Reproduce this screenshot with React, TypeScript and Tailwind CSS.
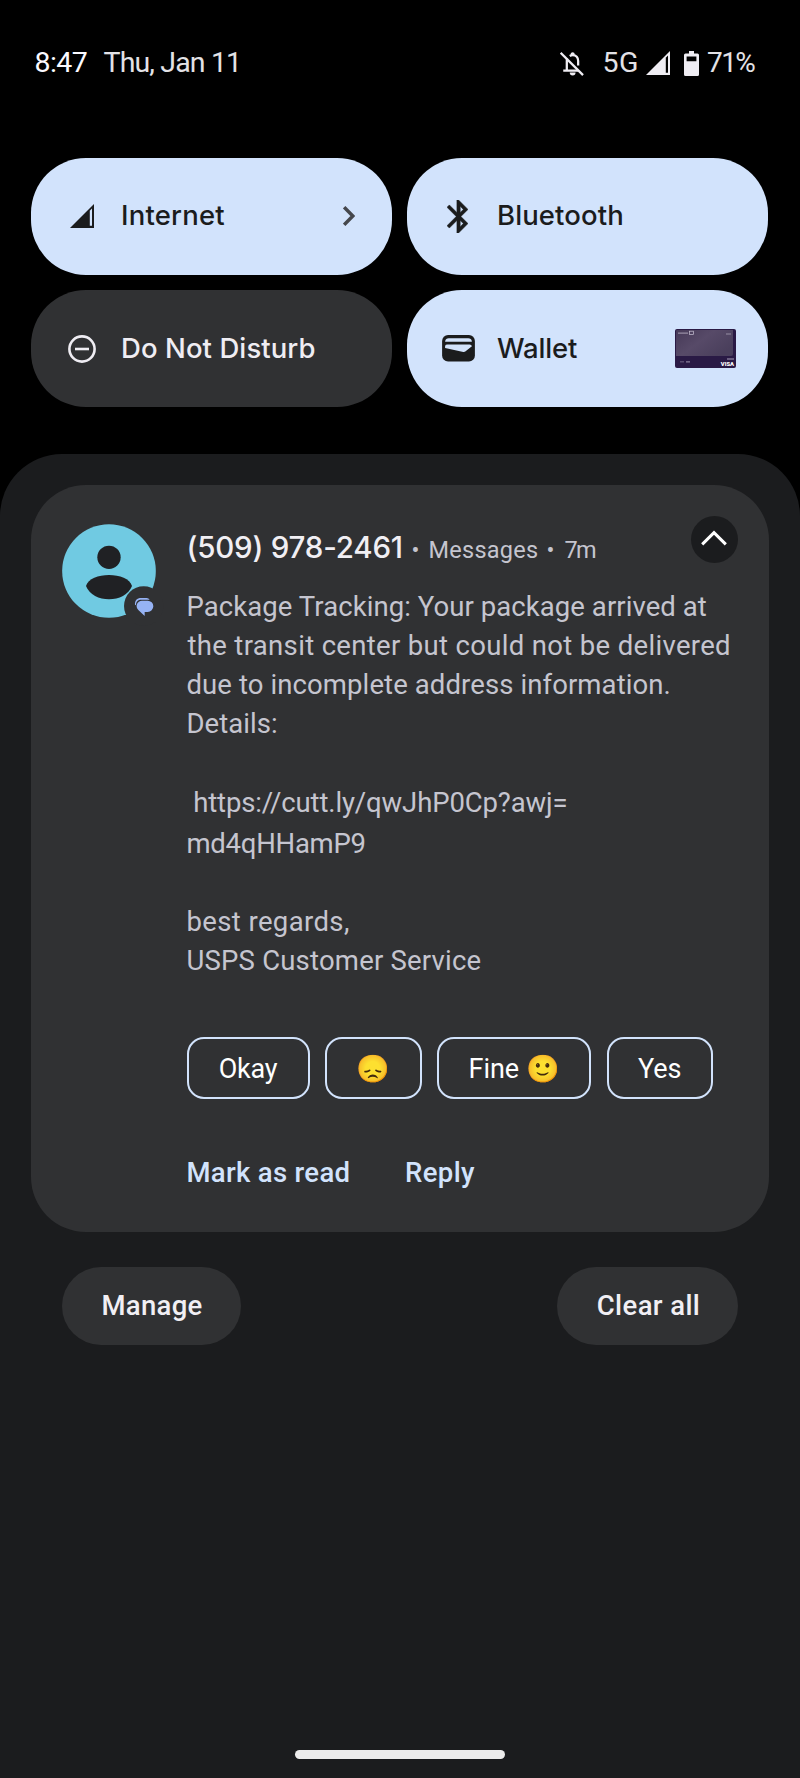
import type { ReactNode } from "react";

function SilentBell() {
  return (
    <svg viewBox="60 62 74 76" className="h-[25px] w-[24px] shrink-0" fill="none" stroke="#efedf3" strokeWidth="7">
      <path d="M90 77C93 75 96 74 99 74C110 74 116 82 116 92V106M82 84C81 87 81 90 81 93V122M70 122H116" />
      <path d="M62 67L131 136" />
      <path d="M93 75V70a6 5 0 0 1 12 0V75Z" fill="#efedf3" stroke="none" />
      <path d="M90 128H108a9 9 0 0 1-18 0Z" fill="#efedf3" stroke="none" />
    </svg>
  );
}

function Signal({ color, hole }: { color: string; hole: string }) {
  return (
    <svg viewBox="0 0 24 24" className="h-[24px] w-[24px] shrink-0">
      <path d="M24 0V24H0Z" fill={color} />
      <path d="M19.8 6.7L22 4.6V21.8H19.8Z" fill={hole} />
    </svg>
  );
}

function Battery() {
  return (
    <svg viewBox="0 0 15 25" className="h-[25px] w-[15px] shrink-0">
      <path
        fillRule="evenodd"
        fill="#efedf3"
        d="M5 0H10V2.5H13.5Q15 2.5 15 4V23.5Q15 25 13.5 25H1.5Q0 25 0 23.5V4Q0 2.5 1.5 2.5H5ZM2.6 5.4V10.2H12.4V5.4Z"
      />
    </svg>
  );
}

function Bluetooth() {
  return (
    <svg viewBox="5 2 12.71 20" className="mr-[2px] h-[33px] w-[21px]" fill="#1b1c1d" stroke="#1b1c1d" strokeWidth="0.3">
      <path d="M17.71 7.71L12 2h-1v7.59L6.41 5 5 6.41 10.59 12 5 17.59 6.41 19 11 14.41V22h1l5.71-5.71-4.3-4.29 4.3-4.29zM13 5.83l1.88 1.88L13 9.59V5.83zm1.88 10.46L13 18.17v-3.76l1.88 1.88z" />
    </svg>
  );
}

function WalletIcon() {
  return (
    <svg viewBox="124 585 99 80" className="h-[26.5px] w-[33px]">
      <rect x="124" y="585" width="99" height="80" rx="18" fill="#1b1c1d" />
      <path d="M133 605C134 598 138 595 144 595H203C209 595 213 598 214 605Z" fill="#d2e3fc" />
      <path d="M133 624V618Q134 614 140 614H207Q213 614 214 619L194 635Q191 637 188 636Z" fill="#d2e3fc" />
    </svg>
  );
}

function DoNotDisturb() {
  return (
    <svg viewBox="0 0 28 28" className="h-[28px] w-[28px]" fill="none" stroke="#efedf3" strokeWidth="2.6">
      <circle cx="14" cy="14" r="12.6" />
      <path d="M7 14H21" />
    </svg>
  );
}

function PaymentCard() {
  return (
    <svg viewBox="0 0 61 39" className="h-[39px] w-[61px]">
      <defs>
        <linearGradient id="sheen" x1="0" y1="0" x2="1" y2="0.6">
          <stop offset="0" stopColor="#473a58" />
          <stop offset="0.5" stopColor="#574a68" />
          <stop offset="1" stopColor="#4a3f5c" />
        </linearGradient>
      </defs>
      <rect width="61" height="39" rx="2" fill="#2a1a45" />
      <path d="M1 2Q1 1 2 1H58V25Q58 27 56 27H1Z" fill="url(#sheen)" />
      <g fill="#c9c2d4">
        <path d="M3 3.6H13V4.8H3ZM51 4.6H56V5.6H51ZM5 32.4H9V33.2H5ZM11 32.2H15V33.6H11Z" opacity="0.6" />
        <path d="M52 29.5H59V30.5H52Z" opacity="0.8" />
      </g>
      <rect x="14.5" y="2.2" width="4" height="3.4" fill="none" stroke="#c9c2d4" strokeWidth="0.7" />
      <text x="45.8" y="36.9" fill="#fff" fontFamily="Roboto, sans-serif" fontSize="6" fontWeight="900" textLength="13.2" lengthAdjust="spacingAndGlyphs">
        VISA
      </text>
    </svg>
  );
}

function Avatar() {
  return (
    <svg viewBox="186 252 282 282" className="h-[94px] w-[94px] overflow-visible">
      <circle cx="327" cy="393" r="140.5" fill="#70cae2" />
      <circle cx="327" cy="352" r="35" fill="#202124" />
      <path d="M258 438C270 394 384 394 396 438C376 491 278 491 258 438Z" fill="#202124" />
      <circle cx="431" cy="498" r="59" fill="#303133" />
      <path d="M405 494C404 482 411 474 423 474H440Q446 474 449 479H425C413 479 408 485 408 496Z" fill="#96b3f5" />
      <path d="M426 482H443a17 17 0 0 1 0 34H434V528L415 510C404 498 412 482 426 482Z" fill="#96b3f5" />
    </svg>
  );
}

function Tile({ icon, label, active, tracking, trailing }: { icon: ReactNode; label: string; active?: boolean; tracking: string; trailing?: ReactNode }) {
  return (
    <button
      className={`flex h-[117px] items-center rounded-[55px] pl-[34.5px] ${active ? "bg-[#d2e3fc] text-[#1b1c1d]" : "bg-[#303133] text-[#efedf3]"}`}
    >
      <span className="flex w-[33px] justify-center">{icon}</span>
      <span className={`ml-[22.5px] pb-[2px] font-['Inter',sans-serif] text-[27.5px] leading-[40px] font-medium whitespace-nowrap ${tracking}`}>{label}</span>
      {trailing}
    </button>
  );
}

const body: { text: string; style: string }[] = [
  { text: "Package Tracking: Your package arrived at", style: "tracking-[0.07px]" },
  { text: "the transit center but could not be delivered", style: "ml-[1px] tracking-[0.33px]" },
  { text: "due to incomplete address information.", style: "tracking-[0.1px]" },
  { text: "Details:", style: "tracking-[0.05px]" },
  { text: "", style: "" },
  { text: "\u00a0https://cutt.ly/qwJhP0Cp?awj=", style: "tracking-[-0.13px]" },
  { text: "md4qHHamP9", style: "mt-[2px] tracking-[-0.26px]" },
  { text: "", style: "" },
  { text: "best regards,", style: "tracking-[0.38px]" },
  { text: "USPS Customer Service", style: "tracking-[0.2px]" },
];

function Chip({ width, children }: { width: string; children: ReactNode }) {
  return (
    <button
      className={`flex h-[62px] items-center justify-center rounded-[17px] border-2 border-[#d2e3fc] pt-[2px] text-[27px] leading-[40px] whitespace-nowrap text-white ${width}`}
    >
      {children}
    </button>
  );
}

export default function App() {
  return (
    <div className="flex h-[1778px] w-[800px] flex-col overflow-hidden bg-black font-['Roboto','Noto_Color_Emoji',sans-serif]">
      <header className="flex h-[126px] shrink-0 items-center pr-[33px] pl-[34.5px] text-[28.5px] leading-[40px] whitespace-nowrap text-[#e3e2e6]">
        <span className="w-[69px] tracking-[-0.6px] text-[#fbfaff]">8:47</span>
        <span className="tracking-[-0.86px]">Thu, Jan 11</span>
        <div className="ml-auto flex items-center text-[28px]">
          <SilentBell />
          <span className="ml-[18.5px] w-[43.5px] text-[28.5px] tracking-[0.6px]">5G</span>
          <Signal color="#efedf3" hole="#000" />
          <span className="ml-[14px] flex">
            <Battery />
          </span>
          <span className="ml-[8px] w-[60px] tracking-[-1.6px]">71%</span>
        </div>
      </header>

      <section className="mt-[31.5px] mr-[32px] ml-[31px] grid grid-cols-2 gap-x-[15px] gap-y-[15.5px]">
        <Tile
          active
          icon={<Signal color="#1b1c1d" hole="#d2e3fc" />}
          label="Internet"
          tracking="tracking-[0.2px]"
          trailing={
            <svg viewBox="0 0 12 20" className="mr-[37px] ml-auto h-[20px] w-[12px]" fill="none" stroke="#45474c" strokeWidth="3.4">
              <path d="M1.2 1.2L9.8 10L1.2 18.8" />
            </svg>
          }
        />
        <Tile active icon={<Bluetooth />} label="Bluetooth" tracking="tracking-[0.1px]" />
        <Tile icon={<DoNotDisturb />} label="Do Not Disturb" tracking="tracking-[0.08px]" />
        <Tile
          active
          icon={<WalletIcon />}
          label="Wallet"
          tracking="tracking-[-0.15px]"
          trailing={
            <span className="mr-[32px] ml-auto">
              <PaymentCard />
            </span>
          }
        />
      </section>

      <main className="mt-[47px] flex flex-1 flex-col rounded-t-[62px] bg-[#1b1c1e] pt-[31px]">
        <article className="mx-[31px] flex h-[747px] shrink-0 rounded-[55px] bg-[#303133]">
          <div className="mt-[39px] ml-[31px] w-[124.5px] shrink-0">
            <Avatar />
          </div>
          <div className="min-w-0 flex-1">
            <div className="flex justify-between pr-[31px]">
              <div className="mt-[42px] flex h-[40px] items-baseline text-[23.5px] leading-[40px] whitespace-nowrap text-[#c5c5cf]">
                <h1 className="w-[225px] font-['Inter',sans-serif] text-[29.5px] font-medium tracking-[-0.2px] text-[#f1eff4]">(509) 978-2461</h1>
                <span className="w-[17px]">•</span>
                <span className="w-[118px] tracking-[0.26px]">Messages</span>
                <span className="w-[18px]">•</span>
                <span className="tracking-[-1.8px]">7m</span>
              </div>
              <button className="mt-[31px] flex h-[47px] w-[47px] items-center justify-center rounded-full bg-[#1b1c1e]">
                <svg viewBox="0 0 26 16" className="mr-px mb-[4px] h-[16px] w-[26px]" fill="none" stroke="#fff" strokeWidth="3">
                  <path d="M1.2 14.4L13 2.6L24.8 14.4" />
                </svg>
              </button>
            </div>
            <div className="mt-[19.8px] text-[27.5px] leading-[39.2px] whitespace-nowrap text-[#c5c5cf]">
              {body.map((line, i) => (
                <p key={i} className={`h-[39.2px] ${line.style}`}>
                  {line.text}
                </p>
              ))}
            </div>
            <div className="mt-[56.2px] flex">
              <Chip width="w-[123px]">
                <span className="tracking-[-0.2px]">Okay</span>
              </Chip>
              <Chip width="ml-[15.5px] w-[96.5px]">😞</Chip>
              <Chip width="ml-[15.5px] w-[154px]">Fine 🙂</Chip>
              <Chip width="ml-[15.5px] w-[106.5px]">Yes</Chip>
            </div>
            <div className="mt-[54px] flex text-[27.5px] leading-[40px] font-medium whitespace-nowrap text-[#d2e3fc]">
              <button className="w-[218.5px] text-left tracking-[0.31px]">Mark as read</button>
              <button className="tracking-[0.4px]">Reply</button>
            </div>
          </div>
        </article>

        <div className="mx-[62px] mt-[35px] flex shrink-0 justify-between text-[27.5px] leading-[40px] font-medium text-[#f1eff4]">
          <button className="h-[78px] w-[179px] rounded-full bg-[#303133] pl-px tracking-[0.3px]">Manage</button>
          <button className="h-[78px] w-[181px] rounded-full bg-[#303133] pl-[2px] tracking-[0.4px]">Clear all</button>
        </div>

        <div className="mt-auto mb-[19px] ml-[295px] h-[9px] w-[210px] rounded-full bg-[#ececec]" />
      </main>
    </div>
  );
}
